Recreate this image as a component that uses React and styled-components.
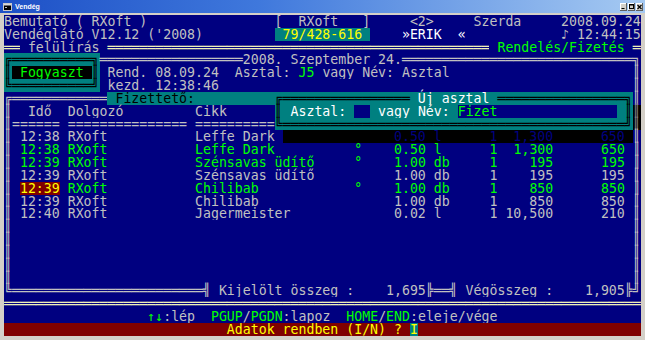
import React from 'react';
import styled, { createGlobalStyle } from 'styled-components';

// windows console palette
const C = {
  blue: '#000080',
  teal: '#008080',
  grey: '#c0c0c0',
  white: '#ffffff',
  green: '#00ff00',
  yellow: '#ffff00',
  red: '#800000',
  black: '#000000',
  dim: '#808080',
  frame: '#f0f0b8',
};

const COLS = 80;
const ROWS = 25;

const ORDERS = [
  { time: '12:38', who: 'RXoft', item: 'Leffe Dark', qty: '0.50', unit: 'l', cnt: '1', price: '1,300', total: '650' },
  { time: '12:38', who: 'RXoft', item: 'Leffe Dark', qty: '0.50', unit: 'l', cnt: '1', price: '1,300', total: '650', marked: true },
  { time: '12:39', who: 'RXoft', item: 'Szénsavas üdítő', qty: '1.00', unit: 'db', cnt: '1', price: '195', total: '195', marked: true },
  { time: '12:39', who: 'RXoft', item: 'Szénsavas üdítő', qty: '1.00', unit: 'db', cnt: '1', price: '195', total: '195' },
  { time: '12:39', who: 'RXoft', item: 'Chilibab', qty: '1.00', unit: 'db', cnt: '1', price: '850', total: '850', marked: true, current: true },
  { time: '12:39', who: 'RXoft', item: 'Chilibab', qty: '1.00', unit: 'db', cnt: '1', price: '850', total: '850' },
  { time: '12:40', who: 'RXoft', item: 'Jagermeister', qty: '0.02', unit: 'l', cnt: '1', price: '10,500', total: '210' },
];

function buildScreen() {
  const grid = Array.from({ length: ROWS }, () =>
    Array.from({ length: COLS }, () => ({ ch: ' ', fg: C.grey, bg: C.blue })),
  );

  const put = (row, col, text, fg = C.grey, bg) => {
    [...text].forEach((ch, i) => {
      const cell = grid[row - 1][col + i];
      if (!cell) return;
      cell.ch = ch;
      cell.fg = fg;
      if (bg) cell.bg = bg;
    });
  };
  const fill = (row, bg) => grid[row - 1].forEach((cell) => { cell.bg = bg; });
  const shade = (row, from, to) => {
    for (let c = from; c <= to; c++) {
      grid[row - 1][c].fg = C.blue;
      grid[row - 1][c].bg = C.black;
    }
  };
  const dbl = (n) => '═'.repeat(n);

  // header
  put(1, 0, 'Bemutató ( RXoft )');
  put(1, 34, '[  RXoft   ]');
  put(1, 51, '<2>');
  put(1, 59, 'Szerda');
  put(1, 70, '2008.09.24');

  put(2, 0, "Vendéglátó V12.12 ('2008)");
  put(2, 34, ' 79/428-616 ', C.yellow, C.teal);
  put(2, 50, '»ERIK', C.white);
  put(2, 57, '«', C.white);
  put(2, 70, '♪ 12:44:15');

  put(3, 0, dbl(2), C.frame);
  put(3, 3, 'felülírás');
  put(3, 13, dbl(48), C.frame);
  put(3, 62, 'Rendelés/Fizetés', C.green);
  put(3, 79, dbl(1), C.frame);

  // Fogyaszt button + order info
  put(4, 0, '╔' + dbl(10) + '╗', C.black, C.teal);
  put(4, 12, dbl(18));
  put(4, 30, '2008. Szeptember 24.');
  put(4, 50, dbl(29));
  put(4, 79, '╗');

  put(5, 0, '║', C.black, C.teal);
  put(5, 1, ' Fogyaszt ', C.green, C.black);
  put(5, 11, '║', C.black, C.teal);
  put(5, 13, 'Rend. 08.09.24');
  put(5, 29, 'Asztal:');
  put(5, 37, 'J5', C.green);
  put(5, 40, 'vagy Név: Asztal');
  put(5, 79, '║');

  put(6, 0, '╚' + dbl(10) + '╝', C.black, C.teal);
  put(6, 13, 'kezd. 12:38:46');
  put(6, 79, '║');

  // table frame + new table dialog
  put(7, 0, '╔' + dbl(12));
  put(7, 13, ' Fizettető:'.padEnd(21), C.black, C.teal);
  put(7, 34, '╔' + dbl(16) + ' ', C.black, C.teal);
  put(7, 52, 'Új asztal', C.white, C.teal);
  put(7, 61, ' ' + dbl(16) + '╗', C.black, C.teal);
  put(7, 79, '║');

  put(8, 0, '║');
  put(8, 3, 'Idő');
  put(8, 8, 'Dolgozó');
  put(8, 24, 'Cikk');
  put(8, 34, '║', C.black, C.teal);
  put(8, 35, ' Asztal: ', C.white, C.teal);
  put(8, 44, '  ', C.grey, C.blue);
  put(8, 46, ' vagy Név: ', C.white, C.teal);
  put(8, 57, 'Fizet'.padEnd(20), C.green, C.blue);
  put(8, 77, ' ', C.black, C.teal);
  put(8, 78, '║', C.black, C.teal);
  put(8, 79, '║', C.dim, C.black);

  put(9, 0, '║');
  put(9, 1, '======');
  put(9, 8, '='.repeat(15));
  put(9, 24, '='.repeat(10));
  put(9, 34, '╚' + dbl(43) + '╝', C.black, C.teal);
  put(9, 79, '║', C.dim, C.black);

  ORDERS.forEach((o, i) => {
    const row = 10 + i;
    const fg = o.marked ? C.green : C.grey;
    put(row, 0, '║');
    if (o.current) put(row, 2, o.time, C.yellow, C.red);
    else put(row, 2, o.time, fg);
    put(row, 8, o.who, fg);
    put(row, 24, o.item, fg);
    if (o.marked) put(row, 44, '°', fg);
    put(row, 53 - o.qty.length, o.qty, fg);
    put(row, 54, o.unit, fg);
    put(row, 61, o.cnt, fg);
    put(row, 69 - o.price.length, o.price, fg);
    put(row, 78 - o.total.length, o.total, fg);
    put(row, 79, '║');
  });
  shade(10, 35, 78);

  for (let row = 17; row <= 21; row++) {
    put(row, 0, '║');
    put(row, 79, '║');
  }

  put(22, 0, '╚' + dbl(24) + '╣');
  put(22, 27, 'Kijelölt összeg :');
  put(22, 48, '1,695');
  put(22, 53, '╠══╣');
  put(22, 58, 'Végösszeg :');
  put(22, 73, '1,905');
  put(22, 78, '╠╝');

  put(23, 0, dbl(80), C.frame);

  // key help + prompt
  put(24, 18, '↑↓', C.green);
  put(24, 20, ':lép');
  put(24, 26, 'PGUP', C.green);
  put(24, 30, '/');
  put(24, 31, 'PGDN', C.green);
  put(24, 35, ':lapoz');
  put(24, 43, 'HOME', C.green);
  put(24, 47, '/');
  put(24, 48, 'END', C.green);
  put(24, 51, ':eleje/vége');

  fill(25, C.red);
  put(25, 28, 'Adatok rendben (I/N) ?', C.yellow);
  put(25, 51, 'I', C.yellow, C.teal);

  return grid;
}

// merge neighbouring cells with the same colours into one run
function toRuns(cells) {
  const runs = [];
  cells.forEach((cell) => {
    const last = runs[runs.length - 1];
    if (last && last.fg === cell.fg && last.bg === cell.bg) last.text += cell.ch;
    else runs.push({ text: cell.ch, fg: cell.fg, bg: cell.bg });
  });
  return runs;
}

const TitleIcon = () => (
  <svg width="9" height="8" viewBox="0 0 9 8">
    <rect x="0.5" y="0.5" width="8" height="7" fill="#000" stroke="#c8c8c8" />
    <rect x="1" y="1" width="7" height="1.5" fill="#d8d8d8" />
    <rect x="2" y="4" width="2" height="1" fill="#c0c0c0" />
  </svg>
);

const MinGlyph = () => (
  <svg width="7" height="8" viewBox="0 0 7 8">
    <rect x="1.5" y="5" width="3" height="1" fill="#000" />
  </svg>
);

const MaxGlyph = () => (
  <svg width="7" height="8" viewBox="0 0 7 8">
    <rect x="1.5" y="1.5" width="4" height="4" fill="none" stroke="#000" />
    <rect x="1.5" y="1.5" width="4" height="1" fill="#000" />
  </svg>
);

const CloseGlyph = () => (
  <svg width="7" height="8" viewBox="0 0 7 8">
    <path d="M1.5 2 L5.5 6 M5.5 2 L1.5 6" stroke="#000" strokeWidth="1.2" />
  </svg>
);

export default function App() {
  const screen = buildScreen();

  return (
    <>
      <GlobalStyle />
      <Window>
        <TitleBar>
          <TitleIcon />
          <TitleText>Vendég</TitleText>
          <Buttons>
            <WinButton><MinGlyph /></WinButton>
            <WinButton><MaxGlyph /></WinButton>
            <WinButton><CloseGlyph /></WinButton>
          </Buttons>
        </TitleBar>
        <Console>
          {screen.map((cells, r) => (
            <ScreenRow key={r}>
              {toRuns(cells).map((run, i) => (
                <Run key={i} $fg={run.fg} $bg={run.bg}>{run.text}</Run>
              ))}
            </ScreenRow>
          ))}
        </Console>
      </Window>
    </>
  );
}

const GlobalStyle = createGlobalStyle`
  html, body {
    margin: 0;
    padding: 0;
    background: #ffffff;
  }
`;

const Window = styled.div`
  width: 645px;
  height: 340px;
  box-sizing: border-box;
  background: #d4d0c8;
  display: flex;
  flex-direction: column;
  overflow: hidden;
`;

const TitleBar = styled.div`
  height: 13px;
  display: flex;
  align-items: center;
  padding: 0 2px 0 3px;
  background: linear-gradient(90deg, #1d50c6 0%, #3f78dc 40%, #a6caf2 100%);
`;

const TitleText = styled.span`
  flex: 1;
  margin-left: 3px;
  font-family: "Liberation Sans", Arial, sans-serif;
  font-weight: bold;
  font-size: 7px;
  line-height: 13px;
  color: #ffffff;
`;

const Buttons = styled.div`
  display: flex;
  gap: 1px;
`;

const WinButton = styled.div`
  width: 7px;
  height: 8px;
  display: flex;
  background: #d4d0c8;
  box-shadow: inset -1px -1px #606060, inset 1px 1px #ffffff;
`;

const Console = styled.div`
  margin: 2px 4px 4px;
  height: 321px;
  background: ${C.blue};
  font-family: "DejaVu Sans Mono", monospace;
  font-size: 13.225px;
  display: grid;
  grid-template-rows: repeat(${ROWS}, 12.84px);
  overflow: hidden;
`;

const ScreenRow = styled.div`
  display: flex;
  white-space: pre;
`;

const Run = styled.span`
  display: block;
  height: 12.84px;
  line-height: 14.84px;
  color: ${(p) => p.$fg};
  background: ${(p) => p.$bg};
`;
